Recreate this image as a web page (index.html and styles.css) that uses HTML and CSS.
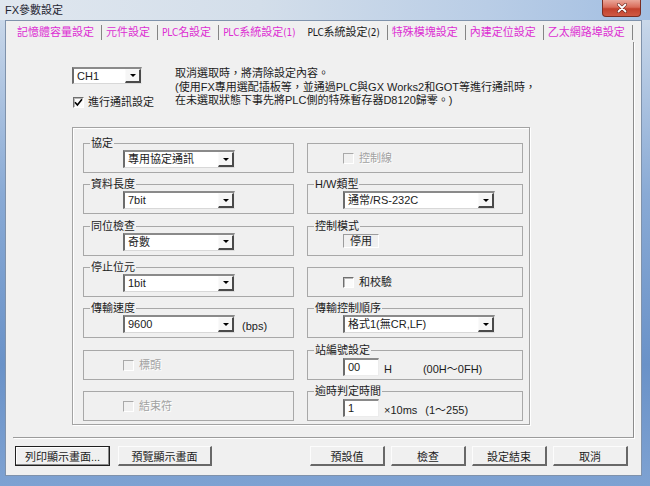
FILE: index.html
```html
<!DOCTYPE html>
<html lang="zh-Hant">
<head>
<meta charset="utf-8">
<title>FX參數設定</title>
<link rel="stylesheet" href="styles.css">
</head>
<body>
<div class="window">
  <div class="titlebar">
    <span class="title">FX參數設定</span>
    <span class="close"><svg width="14" height="10" viewBox="0 0 14 10"><path d="M3.5 1.5 L10.5 8.5 M10.5 1.5 L3.5 8.5" stroke="#5a1a12" stroke-width="3" stroke-linecap="round"/><path d="M3.5 1.5 L10.5 8.5 M10.5 1.5 L3.5 8.5" stroke="#fff" stroke-width="1.8" stroke-linecap="round"/></svg></span>
  </div>
  <div class="client">
    <div class="tabs">
      <span class="tab">記憶體容量設定</span>
      <span class="tab">元件設定</span>
      <span class="tab"><span class="lt">PLC</span>名設定</span>
      <span class="tab pre"><span class="lt">PLC</span>系統設定<span class="lt">(1)</span></span>
      <span class="tab active"><span class="lt">PLC</span>系統設定<span class="lt">(2)</span></span>
      <span class="tab">特殊模塊設定</span>
      <span class="tab">內建定位設定</span>
      <span class="tab">乙太網路埠設定</span>
    </div>
    <div class="panel">
      <div class="top">
        <div class="top-left">
          <div class="combo ch"><span class="v">CH1</span><span class="dd"></span></div>
          <div class="check"><span class="box on"><svg width="9" height="9" viewBox="0 0 9 9"><path d="M1 4.2 L3.4 7 L8 1.2" fill="none" stroke="#000" stroke-width="1.6"/></svg></span><span>進行通訊設定</span></div>
        </div>
        <div class="desc">
          <div>取消選取時，將清除設定內容。</div>
          <div>(使用FX專用選配插板等，並通過PLC與GX Works2和GOT等進行通訊時，</div>
          <div>在未選取狀態下事先將PLC側的特殊暫存器D8120歸零。)</div>
        </div>
      </div>
      <div class="outer">
        <fieldset class="grp l"><legend>協定</legend><div class="fc"><div class="combo wl"><span class="v">專用協定通訊</span><span class="dd"></span></div></div></fieldset>
        <fieldset class="grp r"><legend class="blank"></legend><div class="fc pt"><div class="check dis"><span class="box"></span><span>控制線</span></div></div></fieldset>

        <fieldset class="grp l"><legend>資料長度</legend><div class="fc"><div class="combo wl"><span class="v">7bit</span><span class="dd"></span></div></div></fieldset>
        <fieldset class="grp r"><legend>H/W類型</legend><div class="fc"><div class="combo wr"><span class="v">通常/RS-232C</span><span class="dd"></span></div></div></fieldset>

        <fieldset class="grp l"><legend>同位檢查</legend><div class="fc"><div class="combo wl"><span class="v">奇數</span><span class="dd"></span></div></div></fieldset>
        <fieldset class="grp r"><legend>控制模式</legend><div class="fc"><div class="static">停用</div></div></fieldset>

        <fieldset class="grp l"><legend>停止位元</legend><div class="fc"><div class="combo wl"><span class="v">1bit</span><span class="dd"></span></div></div></fieldset>
        <fieldset class="grp r"><legend class="blank"></legend><div class="fc pt"><div class="check"><span class="box"></span><span>和校驗</span></div></div></fieldset>

        <fieldset class="grp l"><legend>傳輸速度</legend><div class="fc"><div class="combo wl"><span class="v">9600</span><span class="dd"></span></div><span class="unit bps">(bps)</span></div></fieldset>
        <fieldset class="grp r"><legend>傳輸控制順序</legend><div class="fc"><div class="combo wr"><span class="v">格式1(無CR,LF)</span><span class="dd"></span></div></div></fieldset>

        <fieldset class="grp l"><legend class="blank"></legend><div class="fc pt"><div class="check dis"><span class="box"></span><span>標頭</span></div></div></fieldset>
        <fieldset class="grp r"><legend>站編號設定</legend><div class="fc pi"><div class="input">00</div><span class="unit u1">H</span><span class="unit u2">(00H～0FH)</span></div></fieldset>

        <fieldset class="grp l"><legend class="blank"></legend><div class="fc pt"><div class="check dis"><span class="box"></span><span>結束符</span></div></div></fieldset>
        <fieldset class="grp r"><legend>逾時判定時間</legend><div class="fc pi"><div class="input">1</div><span class="unit u1">×10ms</span><span class="unit u3">(1～255)</span></div></fieldset>
      </div>
    </div>
    <div class="buttons">
      <div class="btn default b1">列印顯示畫面...</div>
      <div class="btn b2">預覽顯示畫面</div>
      <div class="btn b3">預設值</div>
      <div class="btn bn">檢查</div>
      <div class="btn bn">設定結束</div>
      <div class="btn bn">取消</div>
    </div>
  </div>
</div>
</body>
</html>
```

FILE: styles.css
```css
* { box-sizing: border-box; }
html, body { margin: 0; padding: 0; }
body {
  width: 650px;
  height: 486px;
  overflow: hidden;
  font-family: "Liberation Sans", "Noto Sans CJK TC", sans-serif;
  font-size: 11px;
  color: #1c1c1c;
}
.window {
  width: 650px;
  height: 486px;
  display: flex;
  flex-direction: column;
  background: linear-gradient(180deg, #d6e0ec 0px, #c4d4e8 30px, #89aad5 40%, #6a92c8 75%, #7ea2d2 100%);
}
.titlebar {
  height: 20px;
  flex: none;
  display: flex;
  align-items: flex-start;
  padding-left: 5px;
  background: linear-gradient(90deg, #e0e7ef 0%, #d3deea 40%, #b9cde6 75%, #a3bfe2 100%);
}
.title {
  line-height: 20px;
  font-size: 11px;
  color: #1e2430;
}
.close {
  margin-left: auto;
  margin-right: 9px;
  width: 39px;
  height: 17px;
  display: flex;
  align-items: center;
  justify-content: center;
  border: 1px solid #7a2e24;
  border-top: none;
  border-radius: 0 0 4px 4px;
  background: linear-gradient(180deg, #eaa699 0%, #d96c5a 45%, #c2412d 55%, #cf5a44 100%);
}
.client {
  flex: 1;
  margin: 0 8px 10px 5px;
  background: #f0f0f0;
  border: 1px solid #7f92ab;
  display: flex;
  flex-direction: column;
}
.tabs {
  height: 21px;
  flex: none;
  display: flex;
  align-items: flex-start;
  padding: 4px 0 0 7px;
}
.tab {
  height: 15px;
  line-height: 15px;
  padding: 0 7px 0 4px;
  border-right: 1px solid #858585;
  color: #dd2ed3;
  white-space: nowrap;
}
.tab .lt {
  font-family: "Liberation Sans Narrow", "DejaVu Sans Condensed", "Liberation Sans", sans-serif;
  font-size: 10px;
  letter-spacing: -0.2px;
}
.tab.pre { border-right-color: transparent; }
.tab.active { color: #1a1a1a; }
.panel {
  flex: none;
  height: 396px;
  margin: 0 7px;
  border-right: 1px solid #8c8c8c;
  border-bottom: 1px solid #9c9c9c;
  box-shadow: 1px 1px 0 #ffffff;
  padding: 25px 0 0 59px;
}
.top {
  display: flex;
  height: 42px;
}
.top-left {
  width: 103px;
  flex: none;
  display: flex;
  flex-direction: column;
}
.desc {
  line-height: 13.5px;
  white-space: nowrap;
  color: #1c1c1c;
}
.combo {
  display: flex;
  height: 18px;
  background: #ffffff;
  border-style: solid;
  border-width: 2px 1px 1px 2px;
  border-color: #8a8a8a #ececec #d8d8d8 #6c6c6c;
}
.combo .v {
  flex: 1;
  padding-left: 3px;
  line-height: 14px;
  white-space: nowrap;
  overflow: hidden;
}
.combo .dd {
  width: 16px;
  flex: none;
  display: flex;
  align-items: center;
  justify-content: center;
  background: #f6f6f6;
  border-style: solid;
  border-width: 1px 2px 2px 1px;
  border-color: #fafafa #4a4a4a #4a4a4a #fafafa;
}
.combo .dd::after {
  content: "";
  border-left: 3px solid transparent;
  border-right: 3px solid transparent;
  border-top: 3px solid #000;
}
.combo.ch { width: 70px; }
.combo.wl { width: 112px; }
.combo.wr { width: 152px; }
.check {
  display: flex;
  align-items: center;
  height: 13px;
  line-height: 13px;
  white-space: nowrap;
}
.top-left .check { margin-top: 12px; margin-left: 1px; }
.box {
  width: 11px;
  height: 11px;
  margin-right: 5px;
  display: flex;
  align-items: center;
  justify-content: center;
  border-style: solid;
  border-width: 1px;
  border-color: #6f6f6f #ffffff #ffffff #6f6f6f;
  box-shadow: inset 1px 1px 0 #b9b9b9;
  background: #fbfbfb;
}
.top-left .box { margin-right: 4px; }
.check.dis { color: #a2a2a2; text-shadow: 1px 1px 0 #ffffff; }
.check.dis .box {
  border-color: #a9a9a9 #ffffff #ffffff #a9a9a9;
  box-shadow: none;
  background: #f0f0f0;
}
.outer {
  margin-top: 18px;
  width: 458px;
  height: 298px;
  border: 1px solid #a3a3a3;
  box-shadow: inset 1px 1px 0 #ffffff, 1px 1px 0 #ffffff;
  padding: 9px 6px 3px 10px;
  display: grid;
  grid-template-columns: 211px 216px;
  grid-template-rows: repeat(7, 36px);
  column-gap: 13px;
  row-gap: 5.33px;
}
.grp {
  margin: 0;
  padding: 0;
  min-width: 0;
  height: 36px;
  border: 1px solid #a8a8a8;
}
.grp legend {
  margin-left: 6px;
  padding: 0 1px;
  height: 13px;
  line-height: 13px;
  font-size: 11px;
  color: #1c1c1c;
}
.grp legend.blank {
  width: 0;
  padding: 0;
  margin-left: 0;
}
.fc {
  display: flex;
  align-items: flex-end;
  white-space: nowrap;
}
.grp.l .fc { padding-left: 39px; }
.grp.r .fc { padding-left: 35px; }
.fc.pt { padding-top: 2px; }
.fc.pi { padding-top: 1px; }
.unit { line-height: 13px; }
.unit.bps { margin-left: 7px; }
.unit.u1 { margin-left: 5px; }
.unit.u2 { margin-left: 31px; }
.unit.u3 { margin-left: 8px; }
.static {
  width: 36px;
  height: 14px;
  margin-top: 1px;
  line-height: 13px;
  text-align: center;
  border-style: solid;
  border-width: 1px;
  border-color: #9c9c9c #ffffff #ffffff #9c9c9c;
}
.input {
  width: 36px;
  height: 18px;
  padding-left: 3px;
  line-height: 14px;
  background: #ffffff;
  border-style: solid;
  border-width: 2px 1px 1px 2px;
  border-color: #8a8a8a #ececec #ececec #6c6c6c;
}
.buttons {
  flex: none;
  display: flex;
  margin-top: 8px;
  height: 20px;
  padding: 0 13px 0 9px;
}
.btn {
  height: 20px;
  display: flex;
  align-items: center;
  justify-content: center;
  white-space: nowrap;
  background: #f0f0f0;
  border-style: solid;
  border-width: 1px 2px 2px 1px;
  border-color: #fcfcfc #686868 #686868 #fcfcfc;
  color: #1c1c1c;
}
.btn.default {
  border: 1px solid #202020;
  box-shadow: inset -1px -1px 0 #8a8a8a, inset 1px 1px 0 #ffffff;
}
.b1 { width: 95px; }
.b2 { width: 94px; margin-left: 8px; }
.b3 { width: 75px; margin-left: auto; }
.bn { width: 75px; margin-left: 6px; }
```
